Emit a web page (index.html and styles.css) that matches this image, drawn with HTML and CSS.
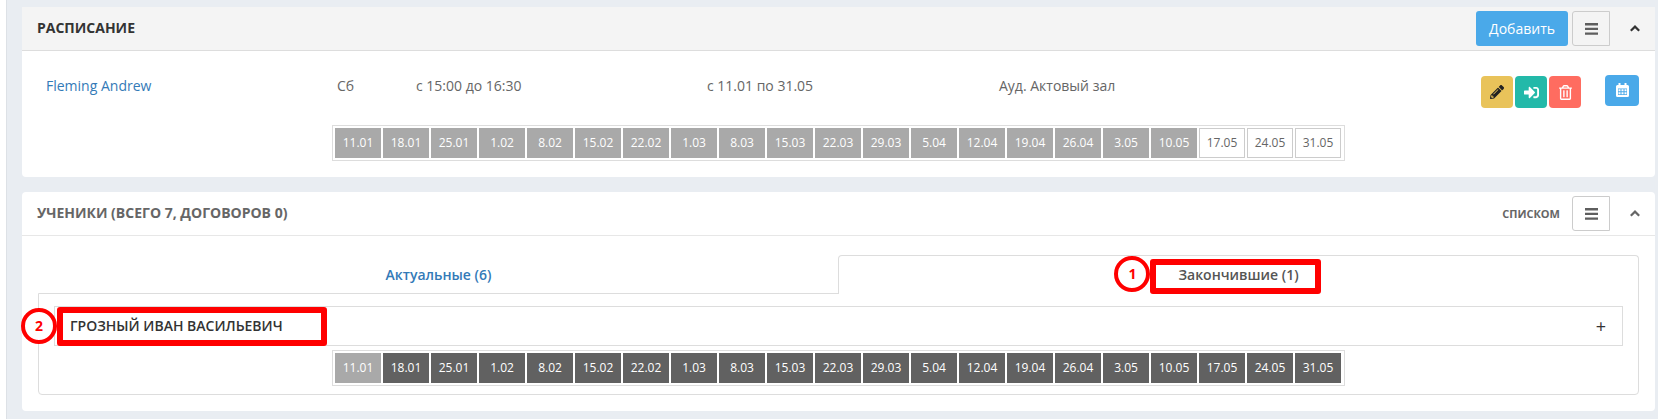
FILE: index.html
```html
<!DOCTYPE html>
<html lang="ru">
<head>
<meta charset="utf-8">
<title>Расписание</title>
<link rel="stylesheet" href="styles.css">
</head>
<body>
<svg width="0" height="0" class="sprite" aria-hidden="true">
  <symbol id="bars" viewBox="0 0 13 12"><path d="M0 0h13v2.400H0zM0 4.700h13v2.400H0zM0 9.400h13v2.400H0z"/></symbol>
  <symbol id="chevron" viewBox="0 0 10 7"><path d="M0.800 5.700L5 1.600l4.200 4.100" fill="none" stroke="currentColor" stroke-width="2.200"/></symbol>
</svg>
<main class="page">
  <section class="card">
    <header class="card-head card-head-muted">
      <h2 class="card-title">Расписание</h2>
      <div class="tools">
        <button class="btn btn-add" type="button">Добавить</button>
        <button class="btn-menu" type="button" aria-label="Меню"><svg width="13" height="12"><use href="#bars"/></svg></button>
        <button class="btn-fold" type="button" aria-label="Свернуть"><svg width="10" height="7"><use href="#chevron"/></svg></button>
      </div>
    </header>
    <div class="schedule">
      <div class="lesson">
        <a class="link" href="#teacher">Fleming Andrew</a>
        <span>Сб</span>
        <span>с 15:00 до 16:30</span>
        <span>с 11.01 по 31.05</span>
        <span>Ауд. Актовый зал</span>
        <div class="actions">
          <button class="act act-edit" type="button" aria-label="Изменить"><svg width="14" height="14" viewBox="0 0 512 512" fill="currentColor"><path d="M498 142l-46 46c-5 5-12 5-17 0L324 77c-5-5-5-12 0-17l46-46c19-19 49-19 68 0l60 60c19 19 19 49 0 68zm-214-42L22 362 0 484c-3 16 12 30 28 28l122-22 262-262c5-5 5-12 0-17L301 100c-4-5-12-5-17 0zM124 340c-5-6-5-14 0-20l154-154c6-5 14-5 20 0s5 14 0 20L144 340c-6 5-14 5-20 0zm-36 84h48v36l-64 12-32-31 12-65h36v48z"/></svg></button>
          <button class="act act-enter" type="button" aria-label="Перевести"><svg width="15" height="15" viewBox="0 0 512 512" fill="currentColor"><path d="M416 448h-84c-7 0-12-5-12-12v-40c0-7 5-12 12-12h84c18 0 32-14 32-32V160c0-18-14-32-32-32h-84c-7 0-12-5-12-12V76c0-7 5-12 12-12h84c53 0 96 43 96 96v192c0 53-43 96-96 96zm-47-209L201 71c-15-15-41-5-41 17v96H24c-13 0-24 11-24 24v96c0 13 11 24 24 24h136v96c0 22 26 32 41 17l168-168c9-9 9-25 0-34z"/></svg></button>
          <button class="act act-delete" type="button" aria-label="Удалить"><svg width="13" height="15" viewBox="0 0 448 512" fill="currentColor"><path d="M268 416h24a12 12 0 0 0 12-12V188a12 12 0 0 0-12-12h-24a12 12 0 0 0-12 12v216a12 12 0 0 0 12 12zM432 80h-82l-34-57A48 48 0 0 0 275 0H173a48 48 0 0 0-41 23L98 80H16A16 16 0 0 0 0 96v16a16 16 0 0 0 16 16h16v336a48 48 0 0 0 48 48h288a48 48 0 0 0 48-48V128h16a16 16 0 0 0 16-16V96a16 16 0 0 0-16-16zM171 51a6 6 0 0 1 5-3h96a6 6 0 0 1 5 3l17 29H154zm197 413H80V128h288zm-212-48h24a12 12 0 0 0 12-12V188a12 12 0 0 0-12-12h-24a12 12 0 0 0-12 12v216a12 12 0 0 0 12 12z"/></svg></button>
          <button class="act act-calendar" type="button" aria-label="Календарь"><svg width="13" height="15" viewBox="0 0 13 15"><path d="M1.500 2h10A1.500 1.500 0 0 1 13 3.500v9a1.500 1.500 0 0 1-1.500 1.500h-10A1.500 1.500 0 0 1 0 12.500v-9A1.500 1.500 0 0 1 1.500 2zM2.500 0h2v3h-2zM8.500 0h2v3h-2z" fill="#fff"/><path d="M2 5.500h9v6.500H2z" fill="#4aa9e9"/><path d="M2.500 6.200h2v2h-2zM5.500 6.200h2v2h-2zM8.500 6.200h2v2h-2zM2.500 9.200h2v2h-2zM5.500 9.200h2v2h-2zM8.500 9.200h2v2h-2z" fill="#fff"/></svg></button>
        </div>
      </div>
      <ul class="dates dates-schedule">
        <li class="past">11.01</li><li class="past">18.01</li><li class="past">25.01</li><li class="past">1.02</li><li class="past">8.02</li><li class="past">15.02</li><li class="past">22.02</li><li class="past">1.03</li><li class="past">8.03</li><li class="past">15.03</li><li class="past">22.03</li><li class="past">29.03</li><li class="past">5.04</li><li class="past">12.04</li><li class="past">19.04</li><li class="past">26.04</li><li class="past">3.05</li><li class="past">10.05</li><li>17.05</li><li>24.05</li><li>31.05</li>
      </ul>
    </div>
  </section>

  <section class="card">
    <header class="card-head">
      <h2 class="card-title">Ученики (всего 7, договоров 0)</h2>
      <div class="tools">
        <a class="as-list" href="#list">списком</a>
        <button class="btn-menu" type="button" aria-label="Меню"><svg width="13" height="12"><use href="#bars"/></svg></button>
        <button class="btn-fold" type="button" aria-label="Свернуть"><svg width="10" height="7"><use href="#chevron"/></svg></button>
      </div>
    </header>
    <div class="students">
      <nav class="tabs">
        <a class="tab link" href="#current">Актуальные (6)</a>
        <a class="tab tab-active" href="#finished"><span class="marked">Закончившие (1)<span class="frame frame-tab"><span class="step">1</span></span></span></a>
      </nav>
      <div class="pane">
        <div class="student">
          <span>ГРОЗНЫЙ ИВАН ВАСИЛЬЕВИЧ</span>
          <button class="expand" type="button" aria-label="Развернуть">+</button>
          <span class="frame frame-student"><span class="step">2</span></span>
        </div>
        <ul class="dates dates-student">
          <li class="past">11.01</li><li class="off">18.01</li><li class="off">25.01</li><li class="off">1.02</li><li class="off">8.02</li><li class="off">15.02</li><li class="off">22.02</li><li class="off">1.03</li><li class="off">8.03</li><li class="off">15.03</li><li class="off">22.03</li><li class="off">29.03</li><li class="off">5.04</li><li class="off">12.04</li><li class="off">19.04</li><li class="off">26.04</li><li class="off">3.05</li><li class="off">10.05</li><li class="off">17.05</li><li class="off">24.05</li><li class="off">31.05</li>
        </ul>
      </div>
    </div>
  </section>
</main>
</body>
</html>
```
FILE: styles.css
```css
* { box-sizing: border-box; }

body {
  margin: 0;
  background: #fff;
  color: #666;
  font: 14px/20px "Open Sans", "Noto Sans", sans-serif;
}

button {
  margin: 0;
  padding: 0;
  border: 0;
  background: none;
  color: inherit;
  font: inherit;
  cursor: pointer;
}

a { color: inherit; text-decoration: none; }
svg { display: block; }
.sprite { position: absolute; }
.link { color: #337ab7; }

.page {
  display: flex;
  flex-direction: column;
  gap: 15px;
  min-height: 100vh;
  margin-left: 6px;
  padding: 7px 3px 8px 15px;
  border-left: 1px solid #dde1e6;
  background: #e9edf2;
}

.card {
  border-radius: 4px;
  background: #fff;
}

.card-head {
  display: flex;
  align-items: center;
  justify-content: space-between;
  height: 44px;
  padding: 0 15px;
  border-bottom: 1px solid #e7e7e7;
}

.card-head-muted {
  border-bottom-color: #ddd;
  background: #f4f4f4;
  color: #333;
}

.card-title {
  margin: 0;
  padding-bottom: 2px;
  font-size: 14px;
  font-weight: 700;
  line-height: 20px;
  text-transform: uppercase;
}

.tools { display: flex; align-items: center; }

.btn-add {
  height: 35px;
  padding: 0 13px;
  border-radius: 3px;
  background: #4aa9e9;
  color: #fff;
}

.btn-menu {
  display: flex;
  align-items: center;
  justify-content: center;
  width: 38px;
  height: 35px;
  margin-left: 4px;
  border: 1px solid #ccc;
  border-radius: 3px 0 0 3px;
  color: #5e5e5e;
  fill: currentColor;
}

.btn-fold { margin-left: 20px; }

.as-list {
  margin-right: 8px;
  font-size: 11px;
  font-weight: 700;
  text-transform: uppercase;
}

.schedule { padding: 24px 16px 16px 24px; }

.lesson {
  display: grid;
  grid-template-columns: 291fr 79fr 291fr 292fr 482fr auto;
  height: 50px;
  line-height: 22px;
}

.actions {
  display: flex;
  align-items: center;
  gap: 2px;
  height: 34px;
}

.act {
  display: flex;
  align-items: center;
  justify-content: center;
  width: 32px;
  height: 32px;
  border-radius: 4px;
  color: #fff;
}

.act-edit { background: #e9c35a; color: #222; }
.act-enter { background: #23b9a9; }
.act-delete { background: #ff6c60; }

.act-calendar {
  width: 34px;
  height: 31px;
  margin: 0 0 3px 22px;
  background: #4aa9e9;
}

.dates {
  display: flex;
  gap: 2px;
  width: max-content;
  margin: 0;
  padding: 2px 3px 2px 2px;
  border: 1px solid #ddd;
  list-style: none;
  font-size: 12px;
}

.dates-schedule { margin-left: 286px; }
.dates-student { margin: 4px 0 0 278px; }

.dates li {
  width: 46px;
  height: 30px;
  border: 1px solid #ccc;
  line-height: 28px;
  text-align: center;
}

.dates .past { border-color: #a9a9a9; background: #a9a9a9; color: #fff; }
.dates .off { border-color: #616161; background: #616161; color: #fff; }

.students { padding: 19px 16px 16px; }

.tabs { display: flex; padding-left: 1px; font-weight: 600; }

.tab {
  flex: 1;
  height: 38px;
  line-height: 40px;
  text-align: center;
}

.tab-active {
  position: relative;
  z-index: 1;
  height: 39px;
  margin-bottom: -1px;
  border: 1px solid #ddd;
  border-bottom: 0;
  border-radius: 4px 4px 0 0;
  background: #fff;
  color: #555;
  line-height: 38px;
}

.pane {
  padding: 12px 15px 8px;
  border: 1px solid #ddd;
  border-radius: 0 0 4px 4px;
}

.student {
  position: relative;
  display: flex;
  align-items: center;
  justify-content: space-between;
  height: 40px;
  padding: 0 15px;
  border: 1px solid #ddd;
  color: #333;
  font-weight: 600;
}

.expand { width: 12px; font-size: 18px; font-weight: 400; }

.marked { position: relative; z-index: 2; display: inline-block; }

/* Red callout frames with step numbers */
.frame {
  position: absolute;
  border: 6px solid #f00;
  border-radius: 3px;
}

.frame-tab { inset: 3px -22px 0 -28px; }
.frame-student { top: 0; left: 2px; width: 270px; height: 39px; }

.step {
  position: absolute;
  right: 100%;
  bottom: -4px;
  width: 36px;
  height: 36px;
  margin-right: 6px;
  border: 4px solid #f00;
  border-radius: 50%;
  background: #fff;
  color: #f00;
  font-weight: 700;
  line-height: 28px;
  text-align: center;
}
```
